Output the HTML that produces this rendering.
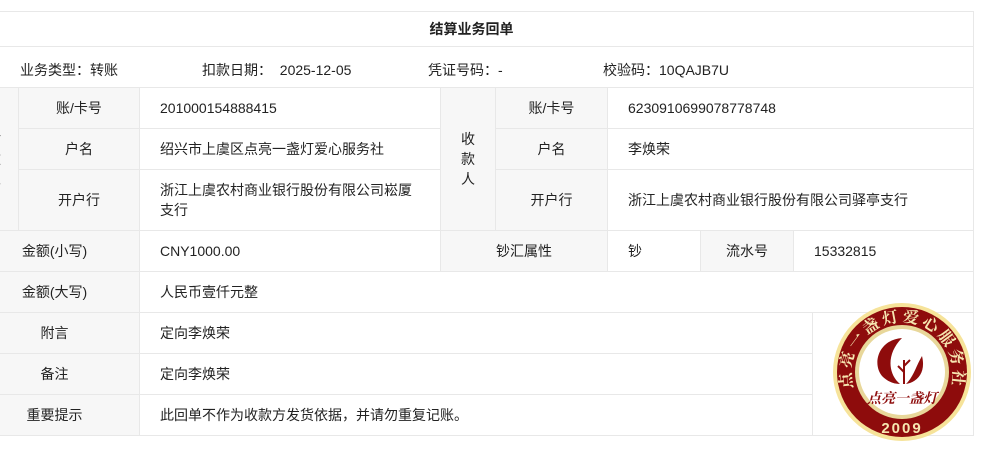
<!DOCTYPE html>
<html><head><meta charset="utf-8"><style>
body{margin:0;width:981px;height:459px;overflow:hidden;background:#fff;font-family:"Liberation Sans","Noto Sans CJK SC",sans-serif;font-size:14px;color:#222;position:relative}
.c{position:absolute;box-sizing:border-box;border:1px solid #e8e8e8;display:flex;align-items:center;justify-content:center;margin:-1px 0 0 -1px}
.g{background:#f7f7f7}
.l{justify-content:flex-start;padding-left:20px}
.t{position:absolute;top:60px;white-space:nowrap}
</style></head><body>
<div class="c" style="left:-30px;top:12px;width:1005px;height:36px;font-weight:bold">结算业务回单</div>
<div class="c" style="left:-30px;top:47px;width:1005px;height:42px"></div>
<span class="t" style="left:20px">业务类型：转账</span>
<span class="t" style="left:202px">扣款日期：&nbsp;&nbsp;2025-12-05</span>
<span class="t" style="left:428px">凭证号码：-</span>
<span class="t" style="left:603px">校验码：10QAJB7U</span>

<div class="c g" style="left:-30px;top:88px;width:50px;height:144px;line-height:20px;text-align:center">付<br>款<br>人</div>
<div class="c g" style="left:19px;top:88px;width:122px;height:42px">账/卡号</div>
<div class="c l" style="left:140px;top:88px;width:302px;height:42px">201000154888415</div>
<div class="c g" style="left:19px;top:129px;width:122px;height:42px">户名</div>
<div class="c l" style="left:140px;top:129px;width:302px;height:42px">绍兴市上虞区点亮一盏灯爱心服务社</div>
<div class="c g" style="left:19px;top:170px;width:122px;height:62px">开户行</div>
<div class="c l" style="left:140px;top:170px;width:302px;height:62px;padding-right:20px;line-height:20px">浙江上虞农村商业银行股份有限公司崧厦支行</div>

<div class="c g" style="left:441px;top:88px;width:56px;height:144px;line-height:20px;text-align:center">收<br>款<br>人</div>
<div class="c g" style="left:496px;top:88px;width:113px;height:42px">账/卡号</div>
<div class="c l" style="left:608px;top:88px;width:367px;height:42px">6230910699078778748</div>
<div class="c g" style="left:496px;top:129px;width:113px;height:42px">户名</div>
<div class="c l" style="left:608px;top:129px;width:367px;height:42px">李焕荣</div>
<div class="c g" style="left:496px;top:170px;width:113px;height:62px">开户行</div>
<div class="c l" style="left:608px;top:170px;width:367px;height:62px">浙江上虞农村商业银行股份有限公司驿亭支行</div>

<div class="c g" style="left:-30px;top:231px;width:171px;height:42px">金额(小写)</div>
<div class="c l" style="left:140px;top:231px;width:302px;height:42px">CNY1000.00</div>
<div class="c g" style="left:441px;top:231px;width:168px;height:42px">钞汇属性</div>
<div class="c l" style="left:608px;top:231px;width:94px;height:42px">钞</div>
<div class="c g" style="left:701px;top:231px;width:94px;height:42px">流水号</div>
<div class="c l" style="left:794px;top:231px;width:181px;height:42px">15332815</div>

<div class="c g" style="left:-30px;top:272px;width:171px;height:42px">金额(大写)</div>
<div class="c l" style="left:140px;top:272px;width:835px;height:42px">人民币壹仟元整</div>
<div class="c g" style="left:-30px;top:313px;width:171px;height:42px">附言</div>
<div class="c l" style="left:140px;top:313px;width:674px;height:42px">定向李焕荣</div>
<div class="c g" style="left:-30px;top:354px;width:171px;height:42px">备注</div>
<div class="c l" style="left:140px;top:354px;width:674px;height:42px">定向李焕荣</div>
<div class="c g" style="left:-30px;top:395px;width:171px;height:42px">重要提示</div>
<div class="c l" style="left:140px;top:395px;width:674px;height:42px">此回单不作为收款方发货依据，并请勿重复记账。</div>
<div class="c" style="left:813px;top:313px;width:162px;height:124px"></div>

<svg style="position:absolute;left:832px;top:302px" width="140" height="140" viewBox="0 0 140 140">
<defs><path id="arc" d="M28,100 A51,51 0 1,1 112,100"/></defs>
<circle cx="70" cy="70" r="69" fill="#f6e39a"/>
<circle cx="70" cy="70" r="65" fill="#8e0c0c"/>
<circle cx="70" cy="70" r="47" fill="#e8d79a"/>
<circle cx="70" cy="70" r="43" fill="#fff"/>
<text font-family="Noto Serif CJK SC,serif" font-size="16" font-weight="bold" fill="#f6e6b0" letter-spacing="3"><textPath href="#arc" startOffset="50%" text-anchor="middle">点亮一盏灯爱心服务社</textPath></text>
<text x="70" y="131" text-anchor="middle" font-size="15" font-weight="bold" fill="#f6e6b0" font-family="Liberation Sans,sans-serif" letter-spacing="2">2009</text>
<path d="M70,36 C46,38 40,62 50,74 C56,80 62,82 68,82 C56,72 54,52 70,36Z" fill="#8e0c0c"/>
<path d="M90,54 C94,70 86,80 74,82 C82,74 84,64 90,54Z" fill="#8e0c0c"/>
<path d="M72,82 L72,58 M72,64 L78,58 M72,70 L66,64" stroke="#8e0c0c" stroke-width="2" fill="none"/>
<text x="70" y="101" text-anchor="middle" font-size="14" font-weight="bold" fill="#8e0c0c" font-family="Noto Serif CJK SC,serif" font-style="italic">点亮一盏灯</text>
</svg>
</body></html>
